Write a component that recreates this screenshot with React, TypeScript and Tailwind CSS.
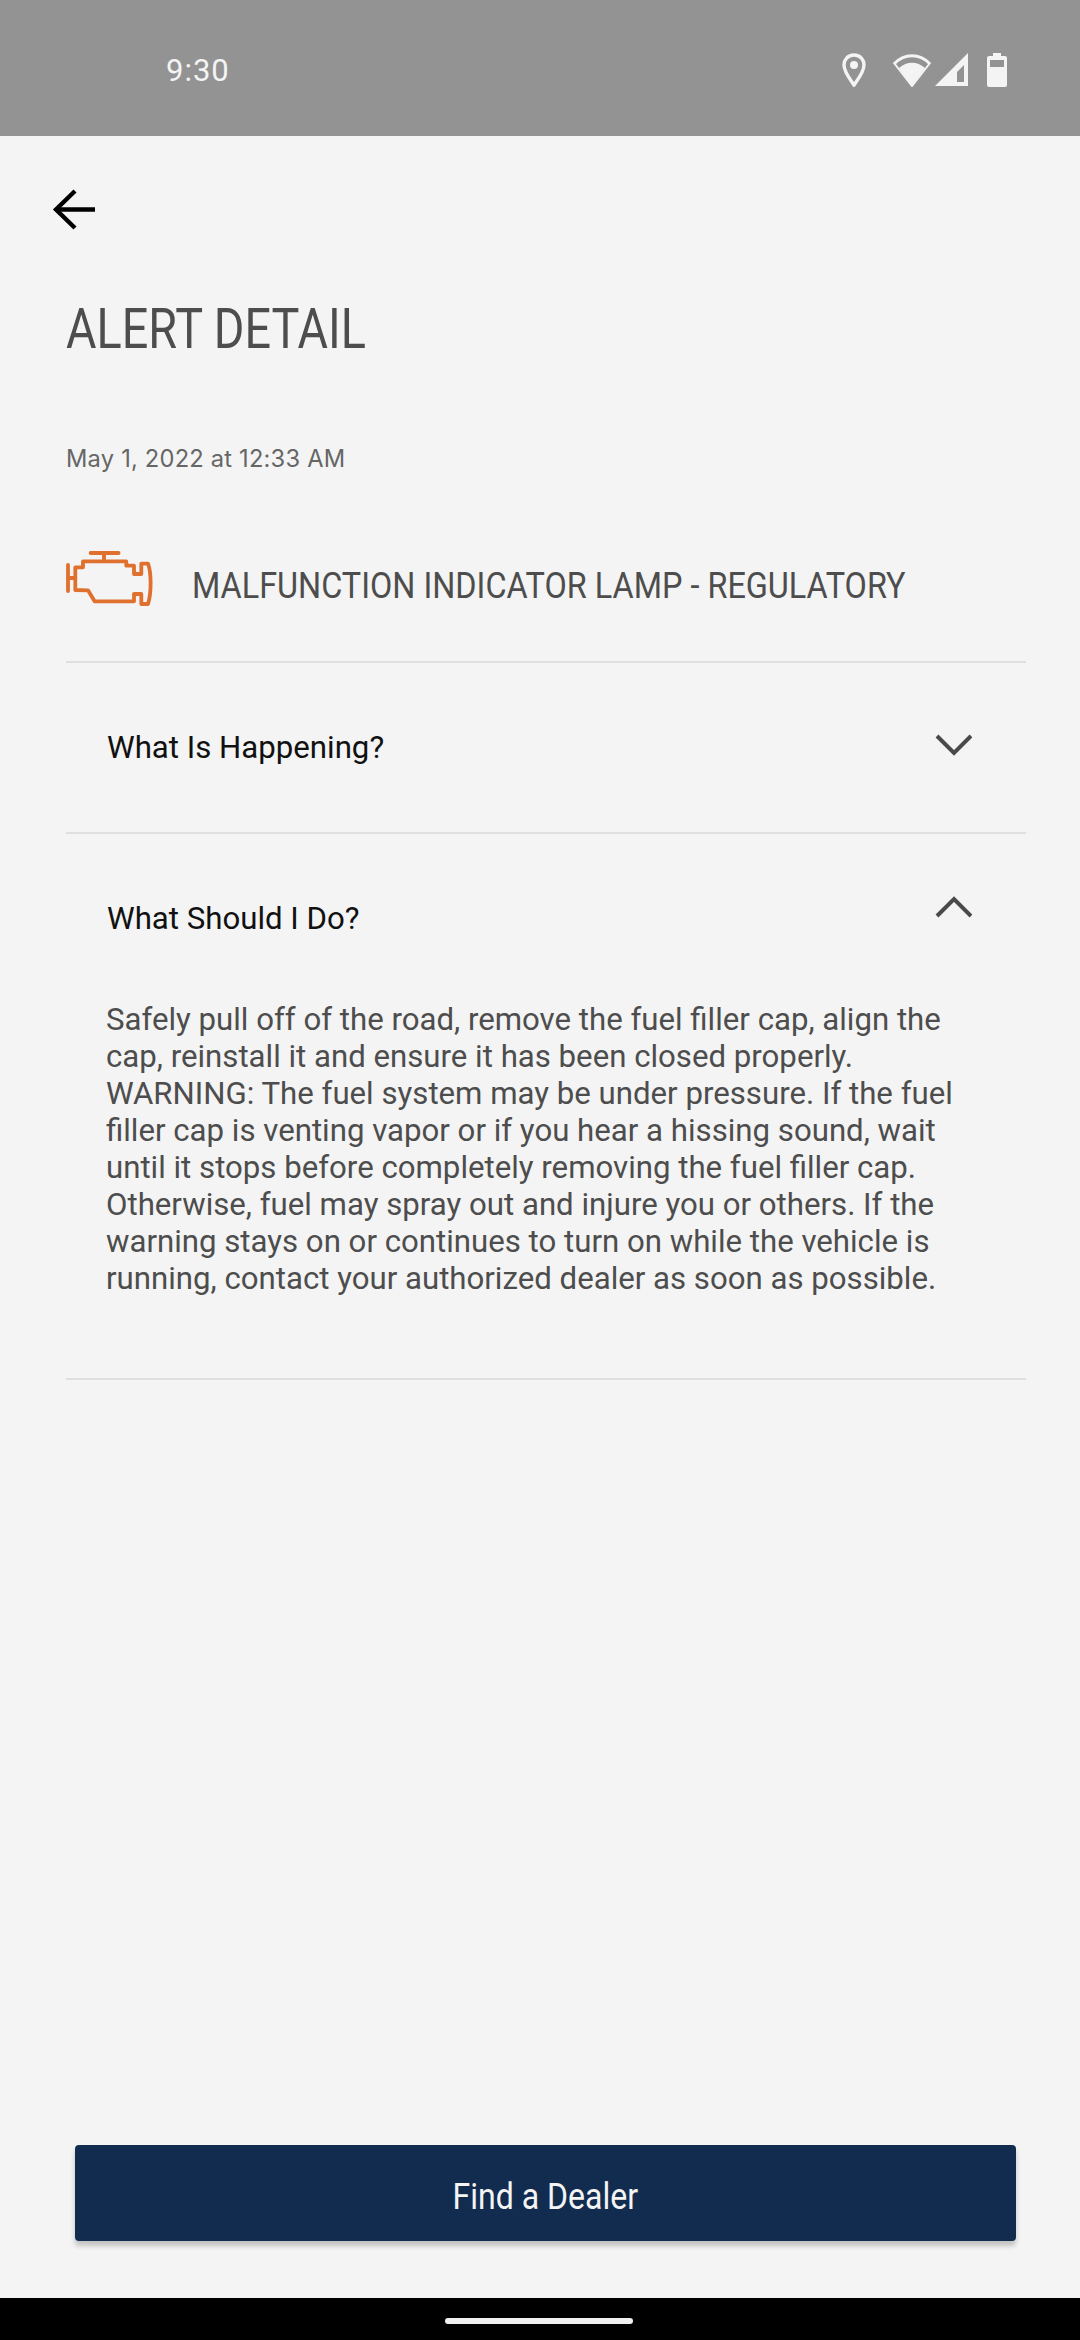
import React from "react";

const Chevron = ({ up }: { up?: boolean }) => (
  <svg width="38" height="24" viewBox="0 0 38 24" fill="none" stroke="#4a4a4a" strokeWidth="4">
    <path d={up ? "M3 21 L20 4 L37 21" : "M3 3 L20 20 L37 3"} />
  </svg>
);

export default function App() {
  return (
    <div className="w-[1080px] h-[2340px] flex flex-col bg-[#f4f4f4] overflow-hidden font-['Roboto',sans-serif]">
      <div className="h-[136px] shrink-0 bg-[#939393] flex items-start pt-[53px] pl-[166px] text-[#f4f4f4]">
        <span className="text-[31px] leading-[36px] font-normal tracking-[1px] w-[676px]">9:30</span>
        <svg width="24" height="34" viewBox="0 0 24 34" className="shrink-0" fill="none">
          <path d="M12 2 C5.5 2 2 7 2 12 C2 19 8 26 12 32 C16 26 22 19 22 12 C22 7 18.5 2 12 2 Z" stroke="#f4f4f4" strokeWidth="3.4" />
          <circle cx="12" cy="12" r="4" fill="#f4f4f4" />
        </svg>
        <svg width="40" height="34" viewBox="0 0 40 34" className="ml-[26px] shrink-0" fill="none">
          <path d="M20 33 L7 15 C15 8 25 8 33 15 Z" fill="#f4f4f4" />
          <path d="M2 11 C12 0 28 0 38 11" stroke="#f4f4f4" strokeWidth="3" />
          <path d="M2 10 L20 33 L38 10" stroke="#f4f4f4" strokeWidth="2" />
        </svg>
        <svg width="33" height="33" viewBox="0 0 33 33" className="ml-[3px] shrink-0">
          <path fillRule="evenodd" d="M33 0 V33 H0 Z M29 12 L22 19 V29 H29 Z" fill="#f4f4f4" />
        </svg>
        <svg width="20" height="34" viewBox="0 0 20 34" className="ml-[19px] shrink-0">
          <path fillRule="evenodd" d="M6 0 H14 V3 H18 Q20 3 20 5 V32 Q20 34 18 34 H2 Q0 34 0 32 V5 Q0 3 2 3 H6 Z M3 7 V14 H17 V7 Z" fill="#f4f4f4" />
        </svg>
      </div>

      <div className="flex-1 flex flex-col min-h-0">
        <svg width="44" height="44" viewBox="0 0 44 44" className="ml-[52px] mt-[52px] shrink-0" fill="none" stroke="#000" strokeWidth="4.4">
          <path d="M43 21.5 H5" />
          <path d="M23 3 L4 21.5 L23 40" />
        </svg>

        <h1 className="ml-[66px] mt-[62px] text-[55px] leading-[70px] font-normal text-[#4d4d4d] origin-left scale-x-[0.85] whitespace-nowrap">
          ALERT DETAIL
        </h1>

        <p className="ml-[66px] mt-[80px] text-[23.7px] leading-[30px] text-[#666666] font-['Inter',sans-serif] tracking-[0.2px] whitespace-nowrap">
          May 1, 2022 at 12:33 AM
        </p>

        <div className="mr-[54px] ml-[66px] mt-[77px] border-b-2 border-[#dfdfdf] flex items-start h-[112px]">
          <svg width="90" height="56" viewBox="0 0 90 56" fill="none" stroke="#e0702e" strokeWidth="3.8" strokeLinejoin="round" strokeLinecap="round" className="shrink-0">
            <path d="M2 14 V40 M2 27 H9.3" />
            <path d="M24.6 2 H52.6 M38 2 V10.3" />
            <path d="M9.3 39 V16.3 H17 V10.3 H60.3 V14.7 H68 V23 H75.3 V12.7 H82 C85.5 22 85.5 42 82 53 H75.3 V43 H68 V50.3 H28.6 L22 39.3 Z" />
          </svg>
          <span className="ml-[36px] mt-[13px] text-[36px] leading-[44px] text-[#4d4d4d] origin-left scale-x-[0.9] whitespace-nowrap">
            MALFUNCTION INDICATOR LAMP - REGULATORY
          </span>
        </div>

        <div className="ml-[66px] mr-[54px] h-[171px] border-b-2 border-[#dfdfdf] pl-[41px] pr-[54px] flex justify-between items-start pt-[67px]">
          <span className="text-[31.2px] leading-[36px] text-[#111111]">What Is Happening?</span>
          <div className="mt-[3px]"><Chevron /></div>
        </div>

        <div className="ml-[66px] mr-[54px] h-[546px] border-b-2 border-[#dfdfdf] pl-[40px] pt-[67px]">
          <div className="flex justify-between items-start pl-px pr-[54px]">
            <span className="text-[31.2px] leading-[36px] text-[#111111]">What Should I Do?</span>
            <div className="-mt-[6px]"><Chevron up /></div>
          </div>
          <p className="mt-[64px] w-[880px] text-[31.2px] leading-[37px] text-[#4d4d4d]">
            Safely pull off of the road, remove the fuel filler cap, align the cap, reinstall it and ensure it has been closed properly. WARNING: The fuel system may be under pressure. If the fuel filler cap is venting vapor or if you hear a hissing sound, wait until it stops before completely removing the fuel filler cap. Otherwise, fuel may spray out and injure you or others. If the warning stays on or continues to turn on while the vehicle is running, contact your authorized dealer as soon as possible.
          </p>
        </div>

        <div className="flex-1" />

        <button className="ml-[75px] mb-[57px] w-[941px] h-[96px] shrink-0 rounded-[4px] bg-[#122c50] shadow-[0_5px_5px_rgba(0,0,0,0.2)] flex items-center justify-center pt-[8px]">
          <span className="text-[36px] leading-[44px] text-[#f4f4f4] scale-x-[0.89] whitespace-nowrap">Find a Dealer</span>
        </button>
      </div>

      <div className="h-[42px] shrink-0 bg-black flex justify-center items-start pt-[20px] pr-[2px]">
        <div className="w-[188px] h-[6px] rounded-full bg-[#f0f0f0]" />
      </div>
    </div>
  );
}
